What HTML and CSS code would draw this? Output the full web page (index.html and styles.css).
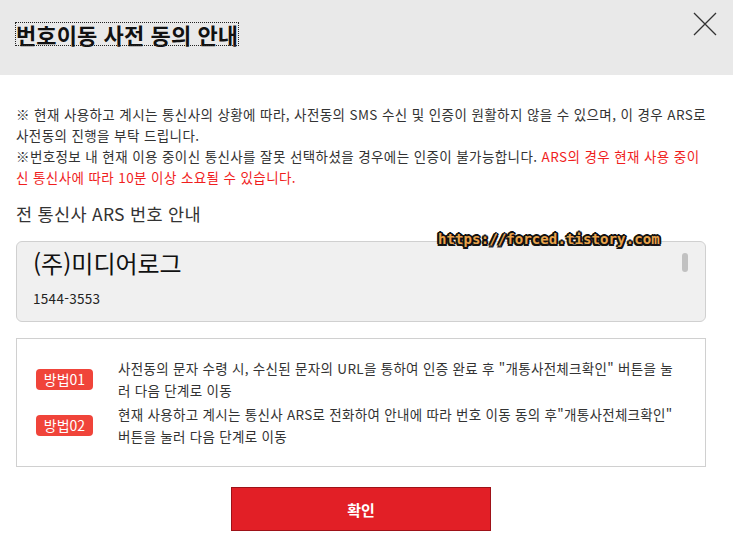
FILE: index.html
```html
<!DOCTYPE html>
<html lang="ko">
<head>
  <meta charset="UTF-8" />
  <meta name="viewport" content="width=device-width, initial-scale=1.0"/>
  <title>번호이동 사전 동의 안내</title>
  <link rel="stylesheet" href="styles.css">
</head>
<body>

  <div class="modal-head">
    <h2 class="modal-title">번호이동 사전 동의 안내</h2>
    <button class="close-button" aria-label="닫기">
      <svg width="24" height="24" viewBox="0 0 24 24">
        <path d="M1 1 L23 23 M23 1 L1 23" stroke="#333" stroke-width="1.3" fill="none"/>
      </svg>
    </button>
  </div>

  <div class="modal-body">
    <p class="notice">
      ※ 현재 사용하고 계시는 통신사의 상황에 따라, 사전동의 SMS 수신 및 인증이 원활하지 않을 수 있으며, 이 경우 ARS로 사전동의 진행을 부탁 드립니다.<br>
      ※번호정보 내 현재 이용 중이신 통신사를 잘못 선택하셨을 경우에는 인증이 불가능합니다. <span class="warn">ARS의 경우 현재 사용 중이신 통신사에 따라 10분 이상 소요될 수 있습니다.</span>
    </p>

    <h3 class="section-title">전 통신사 ARS 번호 안내</h3>

    <div class="ars-box">
      <div class="ars-name">(주)미디어로그</div>
      <div class="ars-number">1544-3553</div>
      <span class="scroll-thumb"></span>
      <span class="watermark">https://forced.tistory.com</span>
    </div>

    <div class="method-box">
      <div class="method">
        <span class="badge">방법01</span>
        <p>사전동의 문자 수령 시, 수신된 문자의 URL을 통하여 인증 완료 후 "개통사전체크확인" 버튼을 눌러 다음 단계로 이동</p>
      </div>
      <div class="method">
        <span class="badge">방법02</span>
        <p>현재 사용하고 계시는 통신사 ARS로 전화하여 안내에 따라 번호 이동 동의 후"개통사전체크확인" 버튼을 눌러 다음 단계로 이동</p>
      </div>
    </div>

    <div class="actions">
      <button class="confirm-button">확인</button>
    </div>
  </div>

</body>
</html>
```

FILE: styles.css
```css
body {
  margin: 0;
  font-family: "Noto Sans CJK KR", "Noto Sans", sans-serif;
  color: #222;
  background-color: #fff;
}
.modal-head {
  height: 75px;
  background-color: #e9e9e9;
  display: flex;
  justify-content: space-between;
  align-items: flex-start;
  padding: 0 16px;
}
.modal-title {
  margin: 23px 0 0;
  font-size: 22px;
  font-weight: bold;
  line-height: 22px;
  letter-spacing: 0.1px;
  color: #111;
  outline: 1px dotted #222;
}
.close-button {
  margin-top: 12px;
  padding: 0;
  border: none;
  background: none;
  cursor: pointer;
}
.modal-body {
  padding: 29px 27px 0 16px;
}
.notice {
  margin: 0;
  font-size: 13.5px;
  line-height: 21px;
  letter-spacing: 0.4px;
  word-break: break-all;
  color: #333;
}
.warn {
  color: #f01e1e;
}
.section-title {
  margin: 14px 0 0;
  font-size: 17.5px;
  font-weight: normal;
  line-height: 24px;
  letter-spacing: 0.3px;
  color: #333;
}
.ars-box {
  position: relative;
  margin-top: 15px;
  height: 79px;
  background-color: #f0f0f0;
  border: 1px solid #d0d0d0;
  border-radius: 6px;
  padding: 0 16px;
}
.ars-name {
  margin-top: 6px;
  font-size: 24px;
  line-height: 30px;
  color: #111;
}
.ars-number {
  margin-top: 10px;
  font-size: 13.5px;
  letter-spacing: 0.3px;
  color: #222;
}
.scroll-thumb {
  position: absolute;
  top: 11px;
  right: 17px;
  width: 6px;
  height: 19px;
  border-radius: 3px;
  background-color: #c1c1c1;
}
.watermark {
  position: absolute;
  top: -11px;
  left: 421px;
  font-family: "DejaVu Sans Mono", monospace;
  font-size: 14px;
  font-weight: bold;
  letter-spacing: 0.1px;
  color: #e8a24a;
  text-shadow: -1.5px -1.5px 0 #111, 1.5px -1.5px 0 #111, -1.5px 1.5px 0 #111, 1.5px 1.5px 0 #111, 0 2px 0 #111, 0 -2px 0 #111, 2px 0 0 #111, -2px 0 0 #111;
}
.method-box {
  margin-top: 16px;
  border: 1px solid #d0d0d0;
  padding: 18px 20px 19px 19px;
}
.method {
  display: flex;
  align-items: center;
  gap: 25px;
}
.method + .method {
  margin-top: 2px;
}
.method p {
  margin: 0;
  font-size: 13.5px;
  line-height: 22px;
  letter-spacing: 0.3px;
  word-break: break-all;
  color: #333;
}
.badge {
  flex-shrink: 0;
  width: 57px;
  height: 21px;
  line-height: 21px;
  text-align: center;
  background-color: #f0443a;
  color: #fff;
  font-size: 14px;
  border-radius: 4px;
}
.actions {
  display: flex;
  justify-content: center;
  margin-top: 20px;
}
.confirm-button {
  width: 260px;
  height: 44px;
  background-color: #e21f26;
  border: 1px solid #9e1218;
  color: #fff;
  font-family: "Noto Sans CJK KR", sans-serif;
  font-size: 15px;
  font-weight: bold;
  cursor: pointer;
}
.confirm-button:hover {
  background-color: #c8181f;
}
```
